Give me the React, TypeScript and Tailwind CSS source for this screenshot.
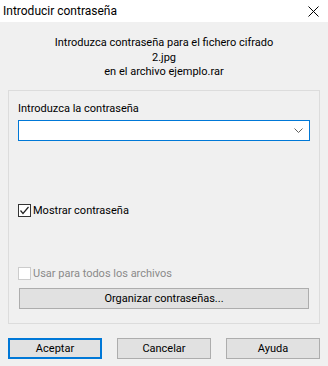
export default function App() {
  return (
    <div
      className="w-[328px] h-[366px] flex flex-col bg-[#f0f0f0] text-[11px] text-black overflow-hidden"
      style={{ fontFamily: '"Segoe UI", Roboto, "Liberation Sans", Arial, sans-serif' }}
    >
      {/* TITLE BAR */}
      <div className="h-[22px] bg-white flex items-center justify-between pl-[3px] pr-[9px]">
        <span className="text-[12px] leading-[15px]">Introducir contraseña</span>
        <svg width="11" height="11" viewBox="0 0 11 11" className="text-black">
          <path d="M0.5 0.5 L10.5 10.5 M10.5 0.5 L0.5 10.5" stroke="currentColor" strokeWidth="1" fill="none" />
        </svg>
      </div>

      {/* BODY */}
      <div className="flex flex-col px-[8px] pt-[14px]">
        <div className="text-center leading-[14.5px]">
          <p>Introduzca contraseña para el fichero cifrado</p>
          <p>2.jpg</p>
          <p>en el archivo ejemplo.rar</p>
        </div>

        {/* GROUP BOX */}
        <div className="mt-[10px] border border-[#dcdcdc] flex flex-col px-[9px] pt-[10px] pb-[14px]">
          <label className="leading-[15px]">Introduzca la contraseña</label>
          <div className="mt-[4px] h-[21px] bg-white border border-[#0078d7] flex items-center justify-end pr-[6px]">
            <svg width="9" height="5" viewBox="0 0 9 5">
              <path d="M0.5 0.5 L4.5 4.5 L8.5 0.5" stroke="#606060" strokeWidth="1" fill="none" />
            </svg>
          </div>

          <div className="mt-[63px] flex items-center h-[13px]">
            <div className="w-[13px] h-[13px] border border-[#333333] bg-white flex items-center justify-center">
              <svg width="11" height="11" viewBox="0 0 11 11">
                <path d="M1.5 5.5 L4 8.5 L9.5 2" stroke="#222222" strokeWidth="1.2" fill="none" />
              </svg>
            </div>
            <span className="ml-[2px] leading-[15px]">Mostrar contraseña</span>
          </div>

          <div className="mt-[50px] flex items-center h-[13px]">
            <div className="w-[13px] h-[13px] border border-[#cccccc] bg-white" />
            <span className="ml-[2px] leading-[15px] text-[#8a8a8a]">Usar para todos los archivos</span>
          </div>

          <button className="mt-[8px] mx-[1px] h-[21px] bg-[#e1e1e1] border border-[#adadad] leading-[15px]">
            Organizar contraseñas...
          </button>
        </div>

        {/* BOTTOM BUTTONS */}
        <div className="mt-[14px] flex justify-between">
          <button className="w-[94px] h-[21px] bg-[#e1e1e1] border-2 border-[#0078d7] leading-[15px]">
            Aceptar
          </button>
          <button className="w-[94px] h-[21px] bg-[#e1e1e1] border border-[#adadad] leading-[15px]">
            Cancelar
          </button>
          <button className="w-[94px] h-[21px] bg-[#e1e1e1] border border-[#adadad] leading-[15px]">
            Ayuda
          </button>
        </div>
      </div>
    </div>
  );
}
